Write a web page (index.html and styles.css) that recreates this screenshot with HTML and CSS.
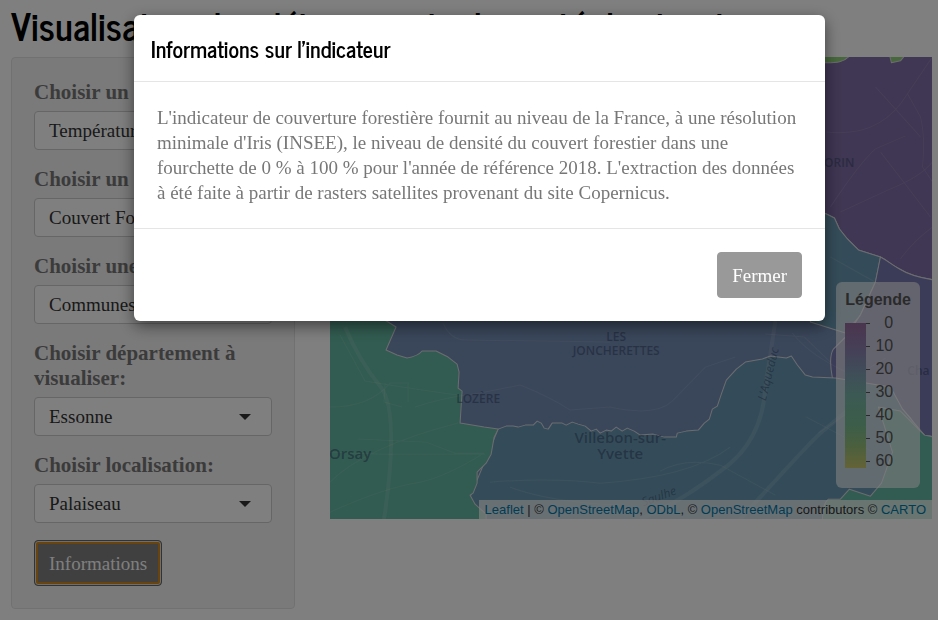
FILE: index.html
```
<!DOCTYPE html>
<html lang="fr">
<head>
<meta charset="utf-8">
<title>Visualisation des déterminants de santé des territoires</title>
<link rel="stylesheet" href="styles.css">
</head>
<body>
<div class="page">
  <h1 class="page-title">Visualisation des déterminants de santé des territoires</h1>
  <div class="layout">
    <form class="sidebar">
      <div class="field">
        <label for="dataset">Choisir un déterminant:</label>
        <select id="dataset"><option>Température</option></select>
      </div>
      <div class="field">
        <label for="indicator">Choisir un indicateur:</label>
        <select id="indicator"><option>Couvert Forestier</option></select>
      </div>
      <div class="field">
        <label for="scale">Choisir une échelle:</label>
        <select id="scale"><option>Communes</option></select>
      </div>
      <div class="field">
        <label for="department">Choisir département à visualiser:</label>
        <select id="department"><option>Essonne</option></select>
      </div>
      <div class="field">
        <label for="place">Choisir localisation:</label>
        <select id="place"><option>Palaiseau</option></select>
      </div>
      <button class="button button-focused" type="button">Informations</button>
    </form>
    <main class="map">
      <svg class="map-drawing" viewBox="0 0 602 462" preserveAspectRatio="xMidYMid slice" aria-hidden="true">
        <rect width="602" height="462" fill="#748db5"/>
        <path class="area purple" d="M350 -2H604V223C590 221 577 217 569 212C560 207 556 203 550 200L528 193L517 182L509 172L504 161L496 157L350 120Z"/>
        <path class="area lime" d="M480 -2H520C514 6 505 6 496 6H480ZM559 -2H575L570 4L561 6Z"/>
        <path class="area teal-blue" d="M480 153L496 157L504 161L509 172L517 182L528 193L550 200L545 225L530 258L515 276L480 265Z"/>
        <path class="area violet" d="M550 200C556 203 560 207 569 212C577 217 590 221 604 223V380L594 378L584 368L580 361L572 352L560 345L502 321Q498 300 503 292L515 280L530 258L545 225Z"/>
        <path class="area teal-blue" d="M168 372L176 369H183L188 370L195 368L203 368L207 364L211 366L214 371L218 372L222 366H232L236 368L242 365L248 367L255 369L261 374L266 372L270 376L276 373L281 374L286 370L292 374L297 371L304 374L310 378L323 377L334 380H346L347 376L356 374L368 373L374 366L379 362L382 352L387 349L391 337L396 323L406 312L415 305L432 302L440 299L456 301L461 299L467 308L475 318L482 320L505 321L560 330L572 352L594 378L604 380V464H130Z"/>
        <path class="area green" d="M-2 260H50L66 270L56 293L67 298L77 301Q88 299 92 294H106L118 300L127 307L129 315L128 331L132 334L130 366L154 370L168 372L164 380L161 397L156 406L147 415V426L143 436L140 438L145 447L156 457V465H-2Z"/>
        <path class="area green" d="M492 466Q492 446 498 442L510 442L519 432L540 439L551 426L562 395L548 350L570 354L594 378L604 380V466Z"/>
        <path class="road wide" d="M15 270Q30 305 50 329T54 462M445 264L435 330Q432 385 390 414Q350 445 310 462M410 462Q475 390 490 376L520 351"/>
        <path class="road" d="M10 278L35 324L72 330Q105 335 128 338M0 350Q40 350 60 326H78V345M55 326L54 345L72 350M0 425Q35 390 128 366M28 382L96 385L125 396H154M0 395L55 397H155M0 455Q55 430 90 425Q115 420 154 396M85 350Q115 340 150 336L190 328Q220 340 240 353L280 350Q325 360 342 344L375 310L405 300M160 425Q220 420 270 426Q360 420 400 390M180 430Q220 445 290 448M330 414Q355 400 390 408L445 438M113 266Q120 283 136 283L280 285M462 276Q480 300 525 319L555 301M435 277L474 280L500 305M476 360L535 391L555 400M488 376L540 340M495 75Q550 82 577 37L602 0M577 37L590 60Q595 80 592 110L602 125M500 150Q530 105 545 92L575 79M545 30L590 80M510 155L560 132Q590 120 602 105M550 95L600 160M570 202Q582 185 602 170M500 200Q525 214 550 228"/>
        <g class="places">
          <text x="286" y="284">LES</text><text x="286" y="298">JONCHERETTES</text>
          <text x="148" y="346">LOZÈRE</text><text x="505" y="110">CORIN</text>
          <text class="town" x="290" y="386">Villebon-sur-</text><text class="town" x="290" y="402">Yvette</text>
          <text class="town" x="20" y="402">Orsay</text><text x="588" y="318">Cha</text>
          <text class="river" transform="translate(442 318) rotate(-76)">L'Aqueduc</text>
          <text class="river" transform="translate(330 443) rotate(-20)">Saulhe</text>
        </g>
      </svg>
      <div class="map-controls">
        <aside class="legend">
          <strong>Légende</strong>
          <div class="legend-scale">
            <div class="legend-bar"></div>
            <ul><li>0</li><li>10</li><li>20</li><li>30</li><li>40</li><li>50</li><li>60</li></ul>
          </div>
        </aside>
        <div class="attribution"><a href="#">Leaflet</a> | © <a href="#">OpenStreetMap</a>, <a href="#">ODbL</a>, © <a href="#">OpenStreetMap</a> contributors © <a href="#">CARTO</a></div>
      </div>
    </main>
  </div>
</div>
<div class="backdrop">
  <section class="modal" role="dialog" aria-modal="true" aria-labelledby="modal-title">
    <header class="modal-header"><h2 id="modal-title">Informations sur l’indicateur</h2></header>
    <div class="modal-body"><p>L'indicateur de couverture forestière fournit au niveau de la France, à une résolution minimale d'Iris (INSEE), le niveau de densité du couvert forestier dans une fourchette de 0 % à 100 % pour l'année de référence 2018. L'extraction des données à été faite à partir de rasters satellites provenant du site Copernicus.</p></div>
    <footer class="modal-footer"><button class="button" type="button">Fermer</button></footer>
  </section>
</div>
</body>
</html>
```
FILE: styles.css
```
* { box-sizing: border-box; }
body { margin: 0; color: #777; background: #fff; font: 19px/25px Georgia, "Liberation Serif", serif; }
h1, h2 { margin: 0; color: #000; font-family: "News Cycle", "Liberation Sans Narrow", "Roboto Condensed", sans-serif; font-weight: 700; }

.page { padding: 5px 6px 0 11px; }
.page-title { font-size: 37px; line-height: 40px; white-space: nowrap; }
.layout { display: grid; grid-template-columns: minmax(0, 8fr) minmax(0, 17fr); gap: 35px; align-items: start; margin-top: 12px; }

.sidebar { padding: 22px; border: 1px solid #e3e3e3; border-radius: 4px; background: #f5f5f5; }
.field { margin-bottom: 17px; }
.field label { display: block; margin-bottom: 6px; font-size: 21px; font-weight: 700; }
.field select {
  display: block; width: 100%; height: 39px; padding: 0 14px;
  border: 1px solid #ccc; border-radius: 4px; color: #333; font: inherit; appearance: none;
  background: #fff url("data:image/svg+xml,%3Csvg xmlns='http://www.w3.org/2000/svg' width='12' height='6'%3E%3Cpath d='M0 0h12L6 6z' fill='%23333'/%3E%3C/svg%3E") no-repeat right 20px center;
}
.button { height: 46px; padding: 0 14px; border: 1px solid #999; border-radius: 4px; background: #999; color: #fff; font: inherit; }
.button-focused { display: block; border-color: #666; background: #808080; box-shadow: inset 0 0 0 1px #ddd, inset 0 0 0 3px #d08a1c; }

.map { position: relative; height: 462px; overflow: hidden; }
.map-drawing { display: block; width: 100%; height: 100%; }
.area { stroke: #d8d8e0; stroke-width: 1; stroke-linejoin: round; }
.purple { fill: #7f6ea6; }
.violet { fill: #7678b0; }
.lime { fill: #8fd07a; }
.teal-blue { fill: #6999b2; }
.green { fill: #64b8a2; }
.road { fill: none; stroke: #fff; stroke-opacity: .11; stroke-width: 1; }
.wide { stroke-width: 4; }
.places { fill: #2c3c62; fill-opacity: .5; font: 600 12px "Open Sans", sans-serif; text-anchor: middle; }
.town { font-size: 15px; }
.river { font-size: 12px; font-style: italic; font-weight: 400; }

.map-controls { position: absolute; right: 0; bottom: 0; display: flex; flex-direction: column; align-items: flex-end; gap: 12px; }
.legend { margin-right: 12px; padding: 8px 9px 14px; border-radius: 6px; background: rgba(255, 255, 255, .6); color: #555; font: 16px/20px Helvetica, "Liberation Sans", sans-serif; }
.legend-scale { display: flex; margin-top: 3px; }
.legend-bar { width: 21px; height: 145px; margin-top: 10px; background: linear-gradient(#966a9c, #8a83b0 20%, #809bb2 34%, #78b4a8 50%, #78bb93 70%, #96bf7c 85%, #c9c66c); }
.legend ul { margin: 0; padding: 0; list-style: none; }
.legend li { display: flex; align-items: center; justify-content: space-between; width: 27px; height: 20px; margin-bottom: 3px; }
.legend li::before { width: 4px; height: 1px; background: #555; content: ""; }
.attribution { padding: 0 6px; background: rgba(255, 255, 255, .7); color: #333; font: 13px/19px Helvetica, "Liberation Sans", sans-serif; white-space: nowrap; }
.attribution a { color: #0078a8; text-decoration: none; }

.backdrop { position: fixed; inset: 0; padding: 15px 113px 0 134px; background: rgba(0, 0, 0, .5); }
.modal { border-radius: 6px; background: #fff; box-shadow: 0 5px 15px rgba(0, 0, 0, .5); }
.modal-header { padding: 18px 17px 16px; border-bottom: 1px solid #e5e5e5; }
.modal-header h2 { font-size: 22px; line-height: 32px; }
.modal-body { padding: 23px; }
.modal-body p { margin: 0; }
.modal-footer { display: flex; justify-content: flex-end; padding: 23px; border-top: 1px solid #e5e5e5; }
```
